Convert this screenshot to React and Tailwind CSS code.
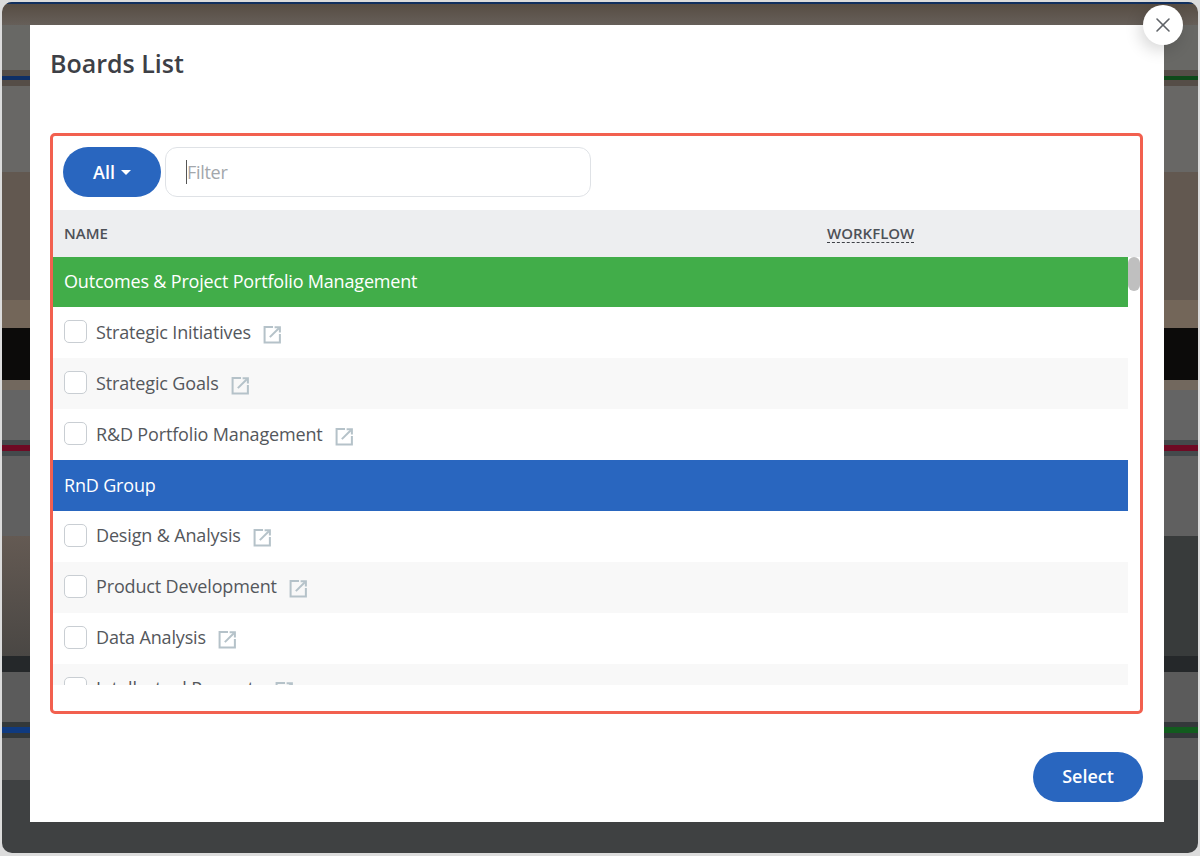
import React from 'react';
import { X } from 'lucide-react';

const sections = [
  {
    name: 'Outcomes & Project Portfolio Management',
    color: 'bg-[#41ad49] h-[50px] pb-[2px]',
    boards: ['Strategic Initiatives', 'Strategic Goals', 'R&D Portfolio Management'],
  },
  {
    name: 'RnD Group',
    color: 'bg-[#2966bf] h-[50.5px]',
    boards: ['Design & Analysis', 'Product Development', 'Data Analysis', 'Intellectual Property'],
  },
];

// blurred photo behind the modal
const Backdrop = () => (
  <svg className="absolute inset-0 w-[1200px] h-[856px]" viewBox="0 0 1200 856">
    <defs>
      <clipPath id="win">
        <rect x="2" y="2" width="1196" height="851" rx="10" />
      </clipPath>
      <linearGradient id="fadeL" x1="0" y1="0" x2="0" y2="1">
        <stop offset="0" stopColor="#645a53" />
        <stop offset="1" stopColor="#4a4744" />
      </linearGradient>
      <linearGradient id="top" x1="0" y1="0" x2="0" y2="1">
        <stop offset="0" stopColor="#54493f" />
        <stop offset="1" stopColor="#665f59" />
      </linearGradient>
    </defs>
    <rect width="1200" height="856" fill="#dcdcdc" />
    <g clipPath="url(#win)">
      <rect y="0" width="1200" height="25" fill="url(#top)" />
      <rect y="25" width="1200" height="45" fill="#686865" />
      <rect y="70" width="1200" height="16" fill="#554d47" />
      <rect x="0" y="76" width="30" height="4" fill="#0f2f66" />
      <rect x="1164" y="76" width="36" height="4" fill="#0e4a1a" />
      <rect y="86" width="1200" height="86" fill="#686765" />
      <rect y="172" width="1200" height="128" fill="#625850" />
      <rect y="300" width="1200" height="28" fill="#736659" />
      <rect y="328" width="1200" height="52" fill="#0c0b0a" />
      <rect y="380" width="1200" height="10" fill="#72685e" />
      <rect y="390" width="1200" height="50" fill="#646464" />
      <rect y="440" width="1200" height="16" fill="#444a4c" />
      <rect y="445" width="1200" height="6" fill="#6e0a24" />
      <rect y="456" width="1200" height="80" fill="#606060" />
      <rect x="0" y="536" width="30" height="120" fill="url(#fadeL)" />
      <rect x="1164" y="536" width="36" height="120" fill="#383b3b" />
      <rect y="656" width="1200" height="16" fill="#25282a" />
      <rect y="672" width="1200" height="50" fill="#5b5b5b" />
      <rect y="722" width="1200" height="16" fill="#33383a" />
      <rect x="0" y="727" width="30" height="6" fill="#0f3a80" />
      <rect x="1164" y="727" width="36" height="6" fill="#125c1e" />
      <rect y="738" width="1200" height="42" fill="#595959" />
      <rect y="780" width="1200" height="76" fill="#3f4142" />
      <rect y="0" width="1200" height="4" fill="#12305f" />
    </g>
  </svg>
);

const OpenIcon = () => (
  <svg
    viewBox="0 0 18 18"
    fill="none"
    stroke="#b5c2c9"
    strokeWidth="1.9"
    className="ml-[12px] mt-[5px] w-[19px] h-[19px] shrink-0"
  >
    <path d="M9.5 2H1.5v14.5H16V8.5" />
    <path d="M6.5 11.5L15 3" />
    <path d="M11 2.2h5v5" />
  </svg>
);

const BoardRow = ({ name, shaded }) => (
  <div className={`h-[51px] shrink-0 flex items-center pl-[11px] pb-[2px] ${shaded ? 'bg-[#f8f8f8]' : 'bg-white'}`}>
    <span className="w-[23px] h-[23px] rounded-[5px] border border-[#c9ced3] bg-white shrink-0" />
    <span className="ml-[9px] text-[18px] leading-6 text-[#54575c] tracking-[-0.15px]">{name}</span>
    <OpenIcon />
  </div>
);

export default function App() {
  return (
    <div className="relative w-[1200px] h-[856px] overflow-hidden font-['Open_Sans',sans-serif]">
      <Backdrop />

      {/* modal */}
      <div className="absolute left-[30px] top-[25px] w-[1134px] h-[797px] bg-white flex flex-col px-[20px]">
        <h2 className="mt-[21px] mb-[1px] h-[34px] text-[25px] leading-[34px] font-semibold text-[#3d4046]">Boards List</h2>

        <div className="mt-[52px] w-[1093px] h-[581px] border-[3px] border-[#f2604f] rounded-[5px] flex flex-col overflow-hidden">
          <div className="h-[74px] shrink-0 flex items-start gap-[4px] pt-[11px] pl-[10px]">
            <button className="w-[98px] h-[50px] rounded-full bg-[#2966bf] text-white text-[18px] font-semibold flex items-center justify-center gap-[6px]">
              All
              <span className="w-0 h-0 border-x-[5px] border-x-transparent border-t-[5px] border-t-white" />
            </button>
            <div className="w-[426px] h-[50px] rounded-[12px] border border-[#dfe2e6] flex items-center pl-[20px]">
              <span className="w-px h-[24px] bg-[#555]" />
              <span className="text-[18px] tracking-[-0.3px] text-[#a3a7ac]">Filter</span>
            </div>
          </div>

          <div className="h-[47px] shrink-0 bg-[#edeef0] flex items-center pl-[11px] pb-[1px] text-[15px] font-semibold text-[#4d5157]">
            <span className="w-[763px]">NAME</span>
            <span className="border-b border-dashed border-[#3d4046] leading-[18px]">WORKFLOW</span>
          </div>

          <div className="flex-1 min-h-0 flex overflow-hidden">
            <div className="w-[1075px] h-[428px] overflow-hidden">
              {sections.map((section) => (
                <div key={section.name}>
                  <div className={`flex items-center pl-[11px] text-[18px] tracking-[-0.18px] text-white ${section.color}`}>
                    {section.name}
                  </div>
                  {section.boards.map((board, i) => (
                    <BoardRow key={board} name={board} shaded={i % 2 === 1} />
                  ))}
                </div>
              ))}
            </div>
            <div className="w-[12px]">
              <div className="h-[34px] w-[12px] rounded-[6px] bg-[#bfbfbf]" />
            </div>
          </div>
        </div>

        <div className="flex justify-end mt-[38px] -mr-[-1px]">
          <button className="w-[110px] h-[50px] pb-[2px] rounded-full bg-[#2966bf] text-white text-[18px] font-semibold">
            Select
          </button>
        </div>
      </div>

      {/* close button sits over the modal corner */}
      <button className="absolute left-[1143px] top-[5px] w-[40px] h-[40px] rounded-full bg-white shadow-[-3px_5px_16px_rgba(0,0,0,0.16)] flex items-center justify-center text-[#5f6368]">
        <X size={24} strokeWidth={1.6} />
      </button>
    </div>
  );
}
